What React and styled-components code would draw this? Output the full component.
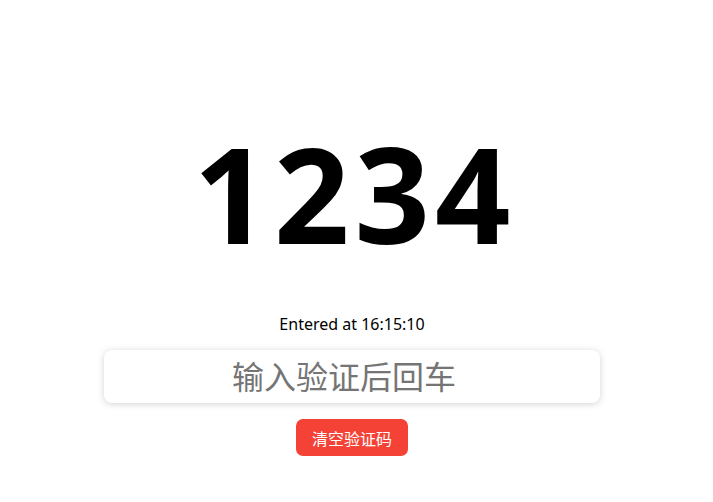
import React, { useState } from 'react';
import styled, { createGlobalStyle } from 'styled-components';

const GlobalStyle = createGlobalStyle`
  html, body {
    margin: 0;
    padding: 0;
    background: #fff;
    font-family: "Noto Sans", "Noto Sans CJK SC", sans-serif;
  }
`;

const Page = styled.div`
  display: flex;
  flex-direction: column;
  align-items: center;
  height: 502px;
  padding: 127px 9px 0 0;
  box-sizing: border-box;
`;

const Code = styled.div`
  font-size: 132px;
  font-weight: 700;
  line-height: 1;
  color: #000;
  letter-spacing: 5px;
  padding-left: 5px;
`;

const Stamp = styled.div`
  margin-top: 55px;
  font-size: 16px;
  color: #000;
  line-height: 20px;
`;

const CodeInput = styled.input`
  margin-top: 16px;
  width: 496px;
  height: 53px;
  box-sizing: border-box;
  border: none;
  border-radius: 8px;
  box-shadow: 0 1px 7px rgba(0, 0, 0, 0.18);
  font-family: "Noto Sans", "Noto Sans CJK SC", sans-serif;
  font-size: 32px;
  text-align: center;
  outline: none;
  padding: 0 22px 0 6px;

  &::placeholder {
    color: #757575;
  }
`;

const ClearButton = styled.button`
  margin-top: 16px;
  width: 112px;
  height: 37px;
  border: none;
  border-radius: 7px;
  background: #f44336;
  color: #fff;
  font-family: "Noto Sans CJK SC", sans-serif;
  font-size: 16px;
  cursor: pointer;
`;

export default function App() {
  const [value, setValue] = useState('');
  return (
    <>
      <GlobalStyle />
      <Page>
        <Code>1234</Code>
        <Stamp>Entered at 16:15:10</Stamp>
        <CodeInput
          value={value}
          onChange={(e) => setValue(e.target.value)}
          placeholder="输入验证后回车"
        />
        <ClearButton onClick={() => setValue('')}>清空验证码</ClearButton>
      </Page>
    </>
  );
}
